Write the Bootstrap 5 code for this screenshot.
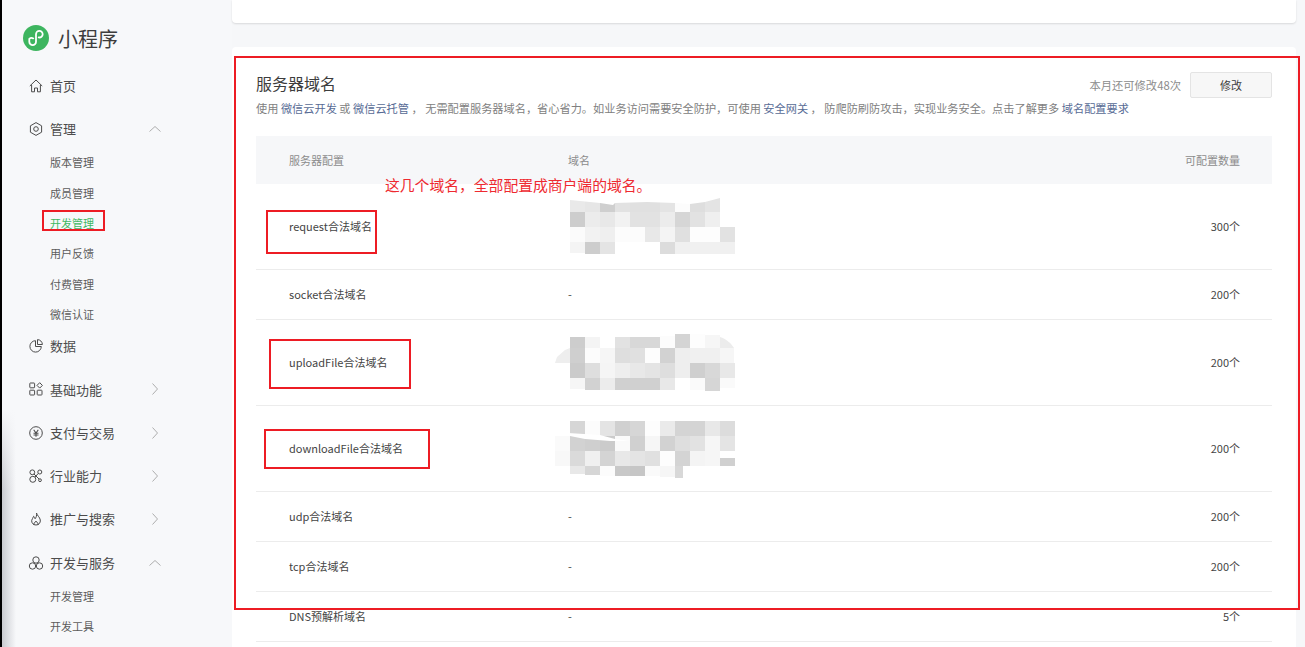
<!DOCTYPE html>
<html lang="zh-CN">
<head>
<meta charset="utf-8">
<title>服务器域名</title>
<link href="https://cdn.jsdelivr.net/npm/bootstrap@5.3.0/dist/css/bootstrap.min.css" rel="stylesheet">
<style>
html,body{height:647px;overflow:hidden}
body{font-family:"Noto Sans CJK SC","Liberation Sans",sans-serif;background:#f6f7f9;color:#353535;font-size:11px;position:relative}
.shell{height:647px}
.sidebar{width:232px;flex:none;color:#4c4c4c;
 background:
  linear-gradient(90deg,#000 2px,transparent 2px),
  linear-gradient(180deg,#f7f8fa 410px,rgba(247,248,250,0) 490px),
  linear-gradient(90deg,#c9cbd0 2px,rgba(247,248,250,0) 16px),
  #f7f8fa}
.brand{height:64px;padding:25px 0 0 23px;font-size:20px;line-height:27px;color:#3d3d3d;gap:9px}
.brand svg{flex:none}
.mainitem{height:43.3px;padding-left:29px;font-size:13px;gap:7px}
.mainitem svg.ico{width:14px;height:14px;flex:none;fill:none;stroke:#4c4c4c;stroke-width:1;overflow:visible}
.chev{width:12px;height:12px;fill:none;stroke:#aeaeae;stroke-width:1;margin-left:auto;margin-right:71px;flex:none}
.sublist{margin-top:-3px;margin-bottom:-5px;font-size:11px;color:#5c5c5c}
.sublist2{margin-top:-3px}
.subitem{height:30.3px;padding-left:50px}
.subitem.on{color:#3fb862}
.content{width:1064px;flex:none}
.topcard{height:23px;background:#fff;border-radius:0 0 4px 4px;box-shadow:0 1px 2px rgba(0,0,0,.12)}
.maincard{margin-top:24px;background:#fff;border-radius:4px 4px 0 0;padding:0 24px;height:600px}
.headline{padding-top:24px}
.ttl{font-size:16px;line-height:24px;font-weight:400;color:#3d3d3d;margin:0}
.desc{font-size:11.2px;line-height:16px;color:#808080;margin:2px 0 0;white-space:nowrap}
.desc a{color:#576b95;text-decoration:none}
.quota{font-size:11.3px;color:#8c8c8c;gap:9px;margin-top:1px;white-space:nowrap}
.modbtn{width:82px;height:26px;padding:0;font-size:11px;line-height:24px;color:#3d3d3d;background:#f7f7f7;border:1px solid #e4e4e4;border-radius:2px}
.dtable{margin:20px 0 0;width:1016px;table-layout:fixed;font-size:11px;color:#444}
.dtable>:not(caption)>*>*{padding:0;border-bottom:1px solid #ececec;vertical-align:middle;background:transparent;color:inherit}
.dtable>thead>tr>th{height:48px;background:#f6f7f9;font-weight:400;color:#8c8c8c;border-bottom:0}
.cw1{width:312px}
.cw3{width:220px}
.dtable>:not(caption)>*>.c1{padding-left:33px}
.dtable>:not(caption)>*>.c3{padding-right:32px;text-align:right}
.tall td{height:86px}
.tall.firstrow td{height:85px}
.short td{height:50px}
.mosa{display:block;width:195px;height:65px;margin-left:-18px;overflow:visible}
.mark-big,.mark-s,.note{position:absolute;z-index:5}
.mark-big,.mark-s{border:2px solid #ed1c24}
.mark-big{left:234px;top:56px;width:1066px;height:554px}
.m-dev{left:42px;top:210px;width:63px;height:21px}
.m-req{left:266px;top:210px;width:111px;height:44px}
.m-up{left:269px;top:339px;width:142px;height:50px}
.m-down{left:264px;top:429px;width:166px;height:40px}
.note{left:385px;top:174px;font-size:14.8px;line-height:21px;color:#ee2a30;white-space:nowrap}
</style>
</head>
<body>
<div class="shell d-flex">
  <aside class="sidebar">
    <div class="brand d-flex align-items-start">
      <svg width="26" height="26" viewBox="0 0 26 26"><circle cx="13" cy="13" r="13" fill="#3db55f"/><path d="M6.300 13.800v3a3.300 3.300 0 1 0 6.700 0V9.200a3.300 3.300 0 1 1 6.700 0a3.300 3.300 0 0 1-4 3.200M10.300 13.400a3.300 3.300 0 0 0-4 .4" fill="none" stroke="#fff" stroke-width="1.800" stroke-linecap="round"/></svg>
      <span>小程序</span>
    </div>
    <div class="mainitem d-flex align-items-center">
      <svg class="ico" viewBox="0 0 14 14"><path d="M.8 7 7 1l6.200 6M2.600 6v6.800h2.900V9h3v3.800h2.900V6"/></svg><span>首页</span>
    </div>
    <div class="mainitem d-flex align-items-center">
      <svg class="ico" viewBox="0 0 14 14"><path d="M7 .6 12.600 3.800v6.400L7 13.400 1.400 10.200V3.800z"/><circle cx="7" cy="7" r="2.300"/></svg><span>管理</span>
      <svg class="chev" viewBox="0 0 12 12"><path d="M.5 8.500 6 3.500l5.500 5"/></svg>
    </div>
    <div class="sublist">
      <div class="subitem d-flex align-items-center">版本管理</div>
      <div class="subitem d-flex align-items-center">成员管理</div>
      <div class="subitem on d-flex align-items-center">开发管理</div>
      <div class="subitem d-flex align-items-center">用户反馈</div>
      <div class="subitem d-flex align-items-center">付费管理</div>
      <div class="subitem d-flex align-items-center">微信认证</div>
    </div>
    <div class="mainitem d-flex align-items-center">
      <svg class="ico" viewBox="0 0 14 14"><path d="M6.500 1.700a5.700 5.700 0 1 0 5.800 5.800H6.500z"/><path d="M8.500.6a5 5 0 0 1 4.900 4.900H8.500z"/></svg><span>数据</span>
    </div>
    <div class="mainitem d-flex align-items-center">
      <svg class="ico" viewBox="0 0 14 14"><rect x=".8" y="1" width="4.800" height="4.800" rx=".6"/><path d="M10.700.7 13.400 3.400 10.700 6.100 8 3.400z"/><rect x=".8" y="8.200" width="4.800" height="4.800" rx=".6"/><rect x="8.200" y="8.200" width="4.800" height="4.800" rx=".6"/></svg><span>基础功能</span>
      <svg class="chev" viewBox="0 0 12 12"><path d="M3.500.5 8.500 6l-5 5.500"/></svg>
    </div>
    <div class="mainitem d-flex align-items-center">
      <svg class="ico" viewBox="0 0 14 14"><circle cx="7" cy="7" r="6.300"/><path d="M4.700 3.800 7 7l2.300-3.200M4.500 7.300h5M4.500 9h5M7 7v3.700" stroke-width="1.100"/></svg><span>支付与交易</span>
      <svg class="chev" viewBox="0 0 12 12"><path d="M3.500.5 8.500 6l-5 5.500"/></svg>
    </div>
    <div class="mainitem d-flex align-items-center">
      <svg class="ico" viewBox="0 0 14 14"><circle cx="3.300" cy="3.300" r="2.400"/><circle cx="10.800" cy="3" r="2"/><circle cx="3.800" cy="10.300" r="3"/><circle cx="11" cy="11.200" r="1.400"/><path d="M5 5l5 5M9.300 4.400 6 8"/></svg><span>行业能力</span>
      <svg class="chev" viewBox="0 0 12 12"><path d="M3.500.5 8.500 6l-5 5.500"/></svg>
    </div>
    <div class="mainitem d-flex align-items-center">
      <svg class="ico" viewBox="0 0 14 14"><path d="M7.500 1C8 3.500 10.800 5 11.300 8c.4 2.800-1.500 5-4.300 5s-4.600-2-4.300-4.700C3 6.700 4.300 6 4.600 4.300 5.700 5 6 6 6 6.800 7.300 5.500 7.900 3.300 7.500 1zM5 13c-.6-1.500.6-2.500 2-3.800 1.400 1.300 2.500 2.300 2 3.800"/></svg><span>推广与搜索</span>
      <svg class="chev" viewBox="0 0 12 12"><path d="M3.500.5 8.500 6l-5 5.500"/></svg>
    </div>
    <div class="mainitem d-flex align-items-center">
      <svg class="ico" viewBox="0 0 14 14"><circle cx="7" cy="4" r="3.200"/><circle cx="3.500" cy="10" r="3.200"/><circle cx="10.500" cy="10" r="3.200"/></svg><span>开发与服务</span>
      <svg class="chev" viewBox="0 0 12 12"><path d="M.5 8.500 6 3.500l5.500 5"/></svg>
    </div>
    <div class="sublist sublist2">
      <div class="subitem d-flex align-items-center">开发管理</div>
      <div class="subitem d-flex align-items-center">开发工具</div>
    </div>
  </aside>

  <main class="content">
    <div class="topcard"></div>
    <section class="maincard">
      <div class="headline d-flex justify-content-between align-items-start">
        <h2 class="ttl">服务器域名</h2>
        <div class="quota d-flex align-items-center">
          <span>本月还可修改48次</span>
          <button type="button" class="btn modbtn">修改</button>
        </div>
      </div>
      <p class="desc">使用 <a href="#">微信云开发</a> 或 <a href="#">微信云托管</a> ， 无需配置服务器域名，省心省力。如业务访问需要安全防护，可使用 <a href="#">安全网关</a> ， 防爬防刷防攻击，实现业务安全。点击了解更多 <a href="#">域名配置要求</a></p>
      <table class="table dtable">
        <colgroup><col class="cw1"><col><col class="cw3"></colgroup>
        <thead>
          <tr><th class="c1">服务器配置</th><th>域名</th><th class="c3">可配置数量</th></tr>
        </thead>
        <tbody>
          <tr class="tall firstrow"><td class="c1">request合法域名</td><td>
            <svg class="mosa" viewBox="0 0 195 65">
              <g>
                <rect x="20" y="6" width="15" height="12" fill="#e9e9e9"/><rect x="35" y="6" width="15" height="12" fill="#e6e6e6"/><rect x="50" y="6" width="15" height="12" fill="#cfcfcf"/><rect x="65" y="6" width="15" height="12" fill="#e2e2e2"/><rect x="80" y="6" width="15" height="12" fill="#e0e0e0"/><rect x="95" y="6" width="15" height="12" fill="#e0e0e0"/><rect x="110" y="6" width="15" height="12" fill="#e4e4e4"/><rect x="125" y="6" width="15" height="12" fill="#fcfcfc"/><rect x="140" y="6" width="15" height="12" fill="#dedede"/><rect x="155" y="4" width="15" height="14" fill="#e4e4e4"/>
                <rect x="20" y="18" width="15" height="15" fill="#cdcdcd"/><rect x="35" y="18" width="15" height="15" fill="#ececec"/><rect x="50" y="18" width="15" height="15" fill="#e8e8e8"/><rect x="65" y="18" width="15" height="15" fill="#f2f2f2"/><rect x="80" y="18" width="15" height="15" fill="#e2e2e2"/><rect x="95" y="18" width="15" height="15" fill="#e2e2e2"/><rect x="110" y="18" width="15" height="15" fill="#ececec"/><rect x="125" y="18" width="15" height="15" fill="#d6d6d6"/><rect x="140" y="18" width="15" height="15" fill="#e2e2e2"/><rect x="155" y="18" width="15" height="15" fill="#efefef"/>
                <rect x="20" y="33" width="15" height="15" fill="#fbfbfb"/><rect x="35" y="33" width="15" height="15" fill="#f2f2f2"/><rect x="50" y="33" width="15" height="15" fill="#efefef"/><rect x="65" y="33" width="15" height="15" fill="#fcfcfc"/><rect x="80" y="33" width="15" height="15" fill="#fcfcfc"/><rect x="95" y="33" width="15" height="15" fill="#e8e8e8"/><rect x="110" y="33" width="15" height="15" fill="#f4f4f4"/><rect x="125" y="33" width="15" height="15" fill="#e0e0e0"/><rect x="140" y="33" width="15" height="15" fill="#fdfdfd"/><rect x="155" y="33" width="15" height="15" fill="#fdfdfd"/><rect x="170" y="33" width="15" height="15" fill="#e2e2e2"/>
                <rect x="20" y="48" width="15" height="11" fill="#f4f4f4"/><rect x="35" y="48" width="15" height="12" fill="#cdcdcd"/><rect x="50" y="48" width="15" height="12" fill="#e4e4e4"/><rect x="110" y="48" width="15" height="12" fill="#dcdcdc"/><rect x="125" y="48" width="15" height="12" fill="#f0f0f0"/><rect x="140" y="48" width="15" height="12" fill="#f0f0f0"/><rect x="155" y="48" width="15" height="12" fill="#f0f0f0"/><rect x="170" y="48" width="15" height="12" fill="#f0f0f0"/>
                <path d="M20 0V6L50 9 63 11 65 9 97 8 125 9 140 10 155 8 170 4V0z" fill="#fff"/>
              </g>
            </svg></td><td class="c3">300个</td></tr>
          <tr class="short"><td class="c1">socket合法域名</td><td>-</td><td class="c3">200个</td></tr>
          <tr class="tall"><td class="c1">uploadFile合法域名</td><td>
            <svg class="mosa" viewBox="0 0 195 65">
              <path d="M5 33 7 27 15 20 20 18V33z" fill="#eeeeee"/>
              <rect x="20" y="7" width="15" height="11" fill="#cdcdcd"/><rect x="35" y="7" width="15" height="11" fill="#f4f4f4"/><rect x="65" y="7" width="15" height="11" fill="#e2e2e2"/><rect x="80" y="7" width="15" height="11" fill="#d8d8d8"/><rect x="95" y="7" width="15" height="11" fill="#d8d8d8"/><rect x="110" y="6" width="15" height="12" fill="#fcfcfc"/><rect x="125" y="4" width="15" height="14" fill="#d4d4d4"/><rect x="140" y="4" width="15" height="14" fill="#fdfdfd"/><rect x="155" y="5" width="15" height="13" fill="#f6f6f6"/><path d="M170 7C176 9 181 13 184 18H170z" fill="#ececec"/>
              <rect x="20" y="18" width="15" height="15" fill="#cfcfcf"/><rect x="35" y="18" width="15" height="15" fill="#fcfcfc"/><rect x="50" y="18" width="15" height="15" fill="#f6f6f6"/><rect x="65" y="18" width="15" height="15" fill="#dedede"/><rect x="80" y="18" width="15" height="15" fill="#e0e0e0"/><rect x="95" y="18" width="15" height="15" fill="#fdfdfd"/><rect x="110" y="18" width="15" height="15" fill="#d2d2d2"/><rect x="125" y="18" width="15" height="15" fill="#eeeeee"/><rect x="140" y="18" width="15" height="15" fill="#f0f0f0"/><rect x="155" y="18" width="15" height="15" fill="#f0f0f0"/><rect x="170" y="18" width="14" height="15" fill="#f6f6f6"/>
              <rect x="20" y="33" width="15" height="15" fill="#cbcbcb"/><rect x="35" y="33" width="15" height="15" fill="#dedede"/><rect x="50" y="33" width="15" height="15" fill="#f5f5f5"/><rect x="65" y="33" width="15" height="15" fill="#eeeeee"/><rect x="80" y="33" width="15" height="15" fill="#e8e8e8"/><rect x="95" y="33" width="15" height="15" fill="#e4e4e4"/><rect x="110" y="33" width="15" height="15" fill="#dedede"/><rect x="125" y="33" width="15" height="15" fill="#eeeeee"/><rect x="140" y="33" width="15" height="15" fill="#cfcfcf"/><rect x="155" y="33" width="15" height="15" fill="#d8d8d8"/><rect x="170" y="33" width="15" height="15" fill="#e8e8e8"/>
              <rect x="20" y="48" width="15" height="11" fill="#f6f6f6"/><rect x="35" y="48" width="15" height="12" fill="#d2d2d2"/><rect x="50" y="48" width="15" height="12" fill="#ececec"/><rect x="65" y="48" width="15" height="12" fill="#d0d0d0"/><rect x="80" y="48" width="15" height="12" fill="#d0d0d0"/><rect x="95" y="48" width="15" height="12" fill="#d0d0d0"/><rect x="110" y="48" width="15" height="12" fill="#e8e8e8"/><rect x="140" y="48" width="15" height="12" fill="#fafafa"/><rect x="155" y="48" width="15" height="13" fill="#d6d6d6"/><rect x="170" y="48" width="15" height="10" fill="#fafafa"/>
            </svg></td><td class="c3">200个</td></tr>
          <tr class="tall"><td class="c1">downloadFile合法域名</td><td>
            <svg class="mosa" viewBox="0 0 195 65">
              <rect x="5" y="20" width="15" height="15" fill="#fafafa"/><rect x="5" y="35" width="15" height="15" fill="#f8f8f8"/>
              <rect x="20" y="5" width="15" height="15" fill="#d6d6d6"/><rect x="35" y="5" width="15" height="15" fill="#fcfcfc"/><rect x="50" y="5" width="15" height="15" fill="#e4e4e4"/><rect x="65" y="5" width="15" height="15" fill="#d0d0d0"/><rect x="80" y="5" width="15" height="15" fill="#d6d6d6"/><rect x="95" y="5" width="15" height="15" fill="#fdfdfd"/><rect x="110" y="5" width="15" height="15" fill="#eaeaea"/><rect x="125" y="5" width="15" height="15" fill="#d4d4d4"/><rect x="140" y="5" width="15" height="15" fill="#d4d4d4"/><rect x="155" y="5" width="15" height="15" fill="#e8e8e8"/><rect x="170" y="5" width="15" height="15" fill="#dcdcdc"/>
              <rect x="20" y="20" width="15" height="15" fill="#d2d2d2"/><rect x="35" y="20" width="15" height="15" fill="#cfcfcf"/><rect x="50" y="20" width="15" height="15" fill="#cbcbcb"/><rect x="65" y="20" width="15" height="15" fill="#fafafa"/><rect x="80" y="20" width="15" height="15" fill="#d0d0d0"/><rect x="95" y="20" width="15" height="15" fill="#f6f6f6"/><rect x="110" y="20" width="15" height="15" fill="#d2d2d2"/><rect x="125" y="20" width="15" height="15" fill="#dedede"/><rect x="140" y="20" width="15" height="15" fill="#e2e2e2"/><rect x="155" y="20" width="15" height="15" fill="#f6f6f6"/><rect x="170" y="20" width="15" height="15" fill="#e4e4e4"/>
              <rect x="20" y="35" width="15" height="15" fill="#dadada"/><rect x="35" y="35" width="15" height="15" fill="#f0f0f0"/><rect x="50" y="35" width="15" height="15" fill="#d4d4d4"/><rect x="65" y="35" width="15" height="15" fill="#e8e8e8"/><rect x="80" y="35" width="15" height="15" fill="#e4e4e4"/><rect x="95" y="35" width="15" height="15" fill="#e0e0e0"/><rect x="110" y="35" width="15" height="15" fill="#fdfdfd"/><rect x="125" y="35" width="15" height="15" fill="#d4d4d4"/><rect x="140" y="35" width="15" height="15" fill="#f4f4f4"/><rect x="155" y="35" width="15" height="15" fill="#f6f6f6"/><rect x="170" y="42" width="15" height="8" fill="#d0d0d0"/>
              <rect x="20" y="50" width="15" height="8" fill="#e8e8e8"/><rect x="35" y="50" width="15" height="9" fill="#d6d6d6"/><rect x="50" y="50" width="15" height="10" fill="#fcfcfc"/><rect x="65" y="50" width="15" height="10" fill="#c8c8c8"/><rect x="80" y="50" width="15" height="10" fill="#c6c6c6"/><rect x="95" y="50" width="15" height="10" fill="#fafafa"/><rect x="110" y="50" width="15" height="11" fill="#f6f6f6"/><rect x="125" y="50" width="8" height="12" fill="#d8d8d8"/>
              <path d="M18 17 50 19 65 23 80 25 60 25 35 23 20 20z" fill="#fff"/>
            </svg></td><td class="c3">200个</td></tr>
          <tr class="short"><td class="c1">udp合法域名</td><td>-</td><td class="c3">200个</td></tr>
          <tr class="short"><td class="c1">tcp合法域名</td><td>-</td><td class="c3">200个</td></tr>
          <tr class="short"><td class="c1">DNS预解析域名</td><td>-</td><td class="c3">5个</td></tr>
        </tbody>
      </table>
    </section>
  </main>
</div>
<div class="mark-big"></div>
<div class="mark-s m-dev"></div>
<div class="mark-s m-req"></div>
<div class="mark-s m-up"></div>
<div class="mark-s m-down"></div>
<div class="note">这几个域名，全部配置成商户端的域名。</div>
<script src="https://cdn.jsdelivr.net/npm/bootstrap@5.3.0/dist/js/bootstrap.bundle.min.js"></script>
</body>
</html>
